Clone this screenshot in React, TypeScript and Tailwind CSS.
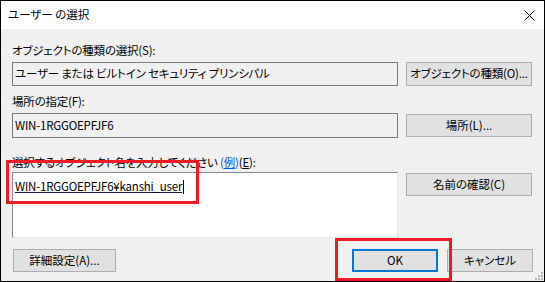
import type { ReactNode } from 'react'

/* Windows "ユーザー の選択" dialog */

const font = "[font-family:'Noto_Sans_CJK_JP','Noto_Sans',sans-serif] [font-feature-settings:'palt']"

function Button({ children, width, primary = false }: { children: ReactNode; width: string; primary?: boolean }) {
  return (
    <div
      className={`${width} h-[23px] flex items-center justify-center whitespace-nowrap bg-[#e1e1e1] text-[11.5px] text-black ${
        primary ? 'border-2 border-[#0078d7]' : 'border border-[#adadad]'
      }`}
    >
      {children}
    </div>
  )
}

function Label({ children, className = '' }: { children: ReactNode; className?: string }) {
  return (
    <div className={`h-[16px] leading-[16px] whitespace-nowrap text-[11.5px] tracking-[-0.2px] text-black ${className}`}>
      {children}
    </div>
  )
}

function ReadOnlyBox({ value }: { value: string }) {
  return (
    <div className="w-[386px] h-full border border-[#7a7a7a] bg-[#f0f0f0] flex items-center pl-[2px] text-[11.5px] tracking-[-0.2px] text-black whitespace-nowrap">
      {value}
    </div>
  )
}

export default function App() {
  return (
    <div className={`relative w-[545px] h-[282px] border border-black bg-[#f0f0f0] flex flex-col overflow-hidden ${font}`}>
      {/* Title bar */}
      <div className="h-[28px] bg-white flex items-center justify-between pl-[7px] pr-[8px]">
        <span className="text-[11.5px] text-black">ユーザー の選択</span>
        <svg width="11" height="11" viewBox="0 0 11 11" className="mr-[1px]">
          <path d="M0.5 0.5 L10.5 10.5 M10.5 0.5 L0.5 10.5" stroke="#000" strokeWidth="1" />
        </svg>
      </div>

      {/* Body */}
      <div className="flex flex-col px-[11px]">
        <Label className="mt-[13px]">オブジェクトの種類の選択(S):</Label>
        <div className="mt-[4px] h-[24px] flex gap-[8px]">
          <ReadOnlyBox value="ユーザー または ビルトイン セキュリティ プリンシパル" />
          <div className="w-[126px] h-[24px] flex items-center justify-center whitespace-nowrap bg-[#e1e1e1] border border-[#adadad] text-[11.5px] tracking-[-0.2px]">
            オブジェクトの種類(O)...
          </div>
        </div>

        <Label className="mt-[7px]">場所の指定(F):</Label>
        <div className="mt-[4px] h-[25px] flex items-center gap-[8px]">
          <ReadOnlyBox value="WIN-1RGGOEPFJF6" />
          <div className="w-[126px] h-[23px] flex items-center justify-center bg-[#e1e1e1] border border-[#adadad] text-[11.5px]">
            場所(L)...
          </div>
        </div>

        <Label className="mt-[16px]">
          選択するオブジェクト名を入力してください{' '}
          <span className="text-[#0066cc]">
            (<span className="underline">例</span>)
          </span>
          (<span className="underline">E</span>):
        </Label>
        <div className="mt-[2px] h-[66px] flex items-start gap-[8px]">
          <div className="w-[386px] h-full bg-white border-t border-l border-t-[#828790] border-l-[#828790] border-r border-b border-r-[#e3e3e3] border-b-[#e3e3e3] pl-[2px] pt-[6px]">
            <div className="flex items-center h-[16px] text-[11.5px] tracking-[-0.2px] text-black whitespace-nowrap">
              <span className="underline decoration-[#1a1a4a]">WIN-1RGGOEPFJF6¥kanshi_user</span>
              <span className="ml-[1px] w-px h-[14px] bg-black" />
            </div>
          </div>
          <div className="mt-[1px] w-[126px] h-[23px] flex items-center justify-center bg-[#e1e1e1] border border-[#adadad] text-[11.5px]">
            名前の確認(C)
          </div>
        </div>

        {/* Footer buttons */}
        <div className="mt-[11px] flex items-center justify-between pl-[1px]">
          <Button width="w-[103px]">詳細設定(A)...</Button>
          <div className="flex gap-[9px]">
            <Button width="w-[86px]" primary>
              OK
            </Button>
            <Button width="w-[86px]">キャンセル</Button>
          </div>
        </div>
      </div>

      {/* Resize grip */}
      <svg width="8" height="8" viewBox="0 0 8 8" className="absolute right-[1px] bottom-[1px]">
        {[
          [6, 0],
          [6, 3],
          [3, 3],
          [6, 6],
          [3, 6],
          [0, 6],
        ].map(([x, y], i) => (
          <rect key={i} x={x} y={y} width="2" height="2" fill="#b4b4b4" />
        ))}
      </svg>

      {/* Annotation boxes */}
      <div className="absolute left-[5px] top-[159px] w-[193px] h-[44px] border-[3px] border-[#ed1c24]" />
      <div className="absolute left-[334px] top-[237px] w-[117px] h-[43px] border-[3px] border-[#ed1c24]" />
    </div>
  )
}
